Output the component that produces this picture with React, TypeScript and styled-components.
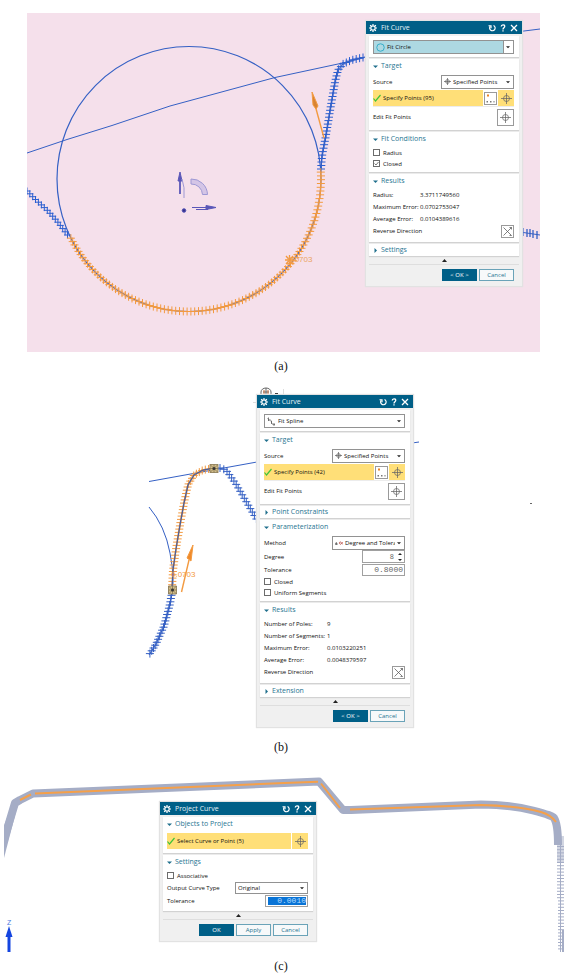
import React from "react";
import styled, { createGlobalStyle, css } from "styled-components";

const GlobalStyle = createGlobalStyle`
  *, *::before, *::after { box-sizing: border-box; }
  body { margin: 0; background: #fff; }
`;

const teal = "#005f87";
const uiFont = `"Open Sans", "Noto Sans", sans-serif`;

/* ---------- page ---------- */

const Page = styled.main`
  padding: 13px 12px 0 0;
`;

const Figure = styled.figure`
  margin: 0;
`;

const Stage = styled.div<{ $tinted?: boolean }>`
  position: relative;
  ${(p) =>
    p.$tinted &&
    css`
      margin: 0 22px 0 27px;
      background: #f5e0eb;
      overflow: hidden;
    `}
`;

const Canvas = styled.svg`
  display: block;
  width: 100%;
  height: auto;
  overflow: visible;
`;

const Caption = styled.figcaption<{ $top: number; $bottom: number }>`
  padding: ${(p) => p.$top}px 0 ${(p) => p.$bottom}px;
  font: 12px/14px "Liberation Serif", serif;
  color: #111;
  text-align: center;
`;

/* ---------- dialog ---------- */

const Dialog = styled.section<{ $place: "right" | "middle" | "left" }>`
  position: absolute;
  width: 156px;
  background: #f0f0f0;
  box-shadow: 0 0 1px 1px #e2e2e2;
  font: 6px/10px ${uiFont};
  color: #111;
  ${(p) =>
    ({
      right: css`top: 8px; right: 18px;`,
      middle: css`top: 8px; left: calc(50% - 24px);`,
      left: css`top: 27px; left: calc(50% - 121px);`,
    })[p.$place]}
`;

const TitleBar = styled.header`
  display: flex;
  align-items: center;
  height: 13px;
  padding: 0 4px 0 3px;
  background: ${teal};
  color: #fff;
`;

const DialogTitle = styled.h2`
  flex: 1;
  margin: 0 0 0 4px;
  font: 7px/12px ${uiFont};
  color: #e4f1f6;
`;

const BarButton = styled.button`
  display: flex;
  width: 8px;
  height: 9px;
  margin-left: 3px;
  padding: 0;
  border: 0;
  background: none;
  color: inherit;
  align-items: center;
  justify-content: center;
`;

const Body = styled.div`
  display: flex;
  flex-direction: column;
  gap: 2px;
  padding: 2px 3px 0;
`;

const Group = styled.section<{ $bottom?: number }>`
  padding: 0 5px ${(p) => p.$bottom ?? 3}px 4px;
  background: #fff;
  box-shadow: 0 1px 1px #d2d2d2;
`;

const GroupTitle = styled.button<{ $closed?: boolean }>`
  display: flex;
  align-items: center;
  gap: 3px;
  width: 100%;
  height: ${(p) => (p.$closed ? 12 : 15)}px;
  padding: ${(p) => (p.$closed ? 0 : "0 0 1px")};
  border: 0;
  background: none;
  font: 7px/12px ${uiFont};
  color: #1f7592;
  text-align: left;
`;

const Row = styled.div<{ $h: number }>`
  display: flex;
  align-items: center;
  justify-content: space-between;
  height: ${(p) => p.$h}px;
  white-space: nowrap;
`;

const TypeRow = styled.div`
  padding-top: 4px;
`;

const Highlight = styled.div<{ $ruled?: boolean }>`
  display: flex;
  gap: 1px;
  height: ${(p) => (p.$ruled ? 18 : 17)}px;
  padding-top: 1px;
  border-bottom: ${(p) => (p.$ruled ? "1px solid #ececec" : 0)};
`;

const Picked = styled.span`
  display: flex;
  flex: 1;
  align-items: center;
  gap: 2px;
  background: #ffdf78;
  white-space: nowrap;
`;

const IconButton = styled.button<{ $size: number; $tone?: "gold" | "white" }>`
  display: flex;
  align-items: center;
  justify-content: center;
  align-self: center;
  width: ${(p) => p.$size}px;
  height: ${(p) => p.$size}px;
  padding: 0;
  border: ${(p) => (p.$tone === "gold" ? 0 : "1px solid #9a9a9a")};
  background: ${(p) => (p.$tone === "gold" ? "#ffdf78" : "#fff")};
`;

const SelectBox = styled.span<{ $w?: number; $h: number; $filled?: boolean }>`
  display: flex;
  align-items: center;
  gap: 2px;
  width: ${(p) => (p.$w ? `${p.$w}px` : "100%")};
  height: ${(p) => p.$h}px;
  padding: 0 3px 0 2px;
  border: 1px solid #929292;
  background: ${(p) =>
    p.$filled ? "linear-gradient(90deg, #add8e2 calc(100% - 10px), #929292 0 calc(100% - 9px), #fff 0)" : "#fff"};
`;

const Select = styled.select`
  flex: 1;
  min-width: 0;
  padding: 0;
  border: 0;
  background: none;
  appearance: none;
  font: inherit;
  color: inherit;
  overflow: hidden;
`;

const CheckLabel = styled.label`
  display: flex;
  align-items: center;
  gap: 3px;
`;

const Check = styled.input`
  appearance: none;
  width: 7px;
  height: 7px;
  margin: 0;
  border: 1px solid #6c6c6c;
  background: #fff;
`;

const CheckWrap = styled.span`
  display: grid;
  > * {
    grid-area: 1 / 1;
  }
`;

const NumberBox = styled.span<{ $w: number; $h: number }>`
  display: flex;
  align-items: center;
  width: ${(p) => p.$w}px;
  height: ${(p) => p.$h}px;
  padding: 1px;
  border: 1px solid #a0a0a0;
  background: #fff;
`;

const NumberInput = styled.input<{ $selected?: boolean; $small?: boolean }>`
  flex: 1;
  min-width: 0;
  width: 100%;
  height: 100%;
  margin-left: ${(p) => (p.$selected ? 1 : 0)}px;
  padding: 0 ${(p) => (p.$small ? 3 : 0)}px 0 0;
  border: 0;
  background: ${(p) => (p.$selected ? "#0a74d6" : "none")};
  font: ${(p) => (p.$small ? 7 : 8)}px/9px "Liberation Mono", monospace;
  color: ${(p) => (p.$selected ? "#b4dcff" : "#666")};
  text-align: right;
`;

const Results = styled.dl<{ $names: number }>`
  display: grid;
  grid-template-columns: ${(p) => p.$names}px 1fr;
  grid-auto-rows: 12px;
  align-items: center;
  margin: 0;
  white-space: nowrap;
`;

const Value = styled.dd`
  margin: 0;
`;

const Expander = styled.button`
  display: flex;
  align-items: center;
  justify-content: center;
  height: 9px;
  width: calc(100% - 6px);
  margin: 0 3px;
  padding: 1px 0 0;
  border: 0;
  border-bottom: 1px solid #dedede;
  background: none;
`;

const Footer = styled.footer`
  display: flex;
  justify-content: flex-end;
  gap: 2px;
  padding: 4px 8px 5px;
`;

const Action = styled.button<{ $primary?: boolean }>`
  width: 35px;
  height: 12px;
  padding: 0;
  border: 1px solid ${(p) => (p.$primary ? teal : "#6aa3b8")};
  background: ${(p) => (p.$primary ? teal : "#f7f9fa")};
  font: 6px/10px ${uiFont};
  color: ${(p) => (p.$primary ? "#fff" : "#1f7592")};
`;

/* ---------- icons ---------- */

const Gear = () => (
  <svg width="8" height="8" viewBox="0 0 16 16" fill="none" stroke="#fff">
    <circle cx="8" cy="8" r="4.4" strokeWidth="2.4" />
    <path
      strokeWidth="2.4"
      d="M8 0v3M8 13v3M0 8h3M13 8h3M2.3 2.3l2.2 2.2M11.5 11.5l2.2 2.2M13.7 2.3l-2.2 2.2M4.5 11.5l-2.2 2.2"
    />
  </svg>
);
const Reset = () => (
  <svg width="8" height="8" viewBox="0 0 16 16" fill="none" stroke="#fff" strokeWidth="2.4">
    <path d="M11 3A5.500 5.500 0 1 1 4.500 4.500" />
    <path d="M1 3.500h5v5" />
  </svg>
);
const Help = () => (
  <svg width="6" height="8" viewBox="0 0 12 16" fill="none" stroke="#fff" strokeWidth="2.600">
    <path d="M2.500 5c0-4.500 7-4.500 7-.5C9.500 7.500 6 7.500 6 11" />
    <path d="M6 12.500v2.600" />
  </svg>
);
const Close = () => (
  <svg width="8" height="8" viewBox="0 0 16 16" stroke="#fff" strokeWidth="2.600">
    <path d="M2 2l12 12M14 2L2 14" />
  </svg>
);
const Triangle = ({ to, fill = "#1f6f8c", size = 5 }: { to: "down" | "right" | "up"; fill?: string; size?: number }) => (
  <svg width={size} height={size} viewBox="0 0 10 10" fill={fill}>
    <path d={{ down: "M0 3h10L5 8z", right: "M3 0v10l5-5z", up: "M0 8h10L5 2z" }[to]} />
  </svg>
);
const Crosshair = ({ size = 11 }: { size?: number }) => (
  <svg width={size} height={size} viewBox="0 0 22 22" fill="none" stroke="#666" strokeWidth={size > 8 ? 1.5 : 2.4}>
    <circle cx="11" cy="11" r="6" />
    <path d="M11 0v22M0 11h22" />
  </svg>
);
const Tick = () => (
  <svg width="8" height="8" viewBox="0 0 16 16" fill="none" stroke="#3fc43a" strokeWidth="2.400">
    <path d="M1 9l4 5L15 2" />
  </svg>
);
const CheckMark = () => (
  <svg width="7" height="7" viewBox="0 0 14 14" fill="none" stroke="#444" strokeWidth="1.400" pointerEvents="none">
    <path d="M3 7l3 3 5-6" />
  </svg>
);
const PointsIcon = () => (
  <svg width="11" height="11" viewBox="0 0 22 22">
    <path fill="#e8842a" d="M4 3h4v4H4z" />
    <path fill="#777" d="M3 16h3v3H3zM10 16h3v3h-3zM17 16h2v3h-2z" />
  </svg>
);
const ReverseIcon = () => (
  <svg width="9" height="9" viewBox="0 0 18 18" fill="none" stroke="#555" strokeWidth="1.500">
    <path d="M1 1l16 16M17 1L1 17M13 1h4v4M13 17h4" />
  </svg>
);
const CircleIcon = () => (
  <svg width="9" height="9" viewBox="0 0 18 18" fill="none" stroke="#28a9c6" strokeWidth="1.800">
    <circle cx="9" cy="9" r="7.500" />
  </svg>
);
const SplineIcon = () => (
  <svg width="9" height="9" viewBox="0 0 18 18" fill="none" stroke="#555" strokeWidth="1.500">
    <path d="M3 1v7M1 3l4 3M3 7c5-3 5 0 6 4s3 4 7 4M9 8v6M14 12v6" />
  </svg>
);
const MethodIcon = () => (
  <svg width="8" height="6" viewBox="0 0 18 12" fill="none" strokeWidth="1.800">
    <path stroke="#333" d="M1 9l2-4 2 4z" />
    <path stroke="#b5443c" d="M17 4c-3 6-7 6-7 2s4-3 7 3" />
  </svg>
);
const Spin = () => (
  <svg width="6" height="10" viewBox="0 0 12 20" fill="#222">
    <path d="M2 6h8L6 2zM2 14h8l-4 4z" />
  </svg>
);

/* ---------- dialog parts ---------- */

function Bar({ title }: { title: string }) {
  return (
    <TitleBar>
      <Gear />
      <DialogTitle>{title}</DialogTitle>
      <BarButton aria-label="Reset"><Reset /></BarButton>
      <BarButton aria-label="Help"><Help /></BarButton>
      <BarButton aria-label="Close"><Close /></BarButton>
    </TitleBar>
  );
}

function Heading({ children, closed }: { children: string; closed?: boolean }) {
  return (
    <GroupTitle $closed={closed} aria-expanded={!closed}>
      <Triangle to={closed ? "right" : "down"} />
      {children}
    </GroupTitle>
  );
}

type DropProps = {
  id?: string;
  label?: string;
  value: string;
  w?: number;
  h?: number;
  filled?: boolean;
  icon?: React.ReactNode;
};
function Drop({ id, label, value, w, h = 14, filled, icon }: DropProps) {
  return (
    <SelectBox $w={w} $h={h} $filled={filled}>
      {icon}
      <Select id={id} aria-label={label}>
        <option>{value}</option>
      </Select>
      <Triangle to="down" fill="#222" size={4} />
    </SelectBox>
  );
}

function CheckRow({ label, checked }: { label: string; checked?: boolean }) {
  return (
    <Row $h={11}>
      <CheckLabel>
        <CheckWrap>
          <Check type="checkbox" defaultChecked={checked} />
          {checked && <CheckMark />}
        </CheckWrap>
        {label}
      </CheckLabel>
    </Row>
  );
}

function TargetGroup({ id, count }: { id: string; count: number }) {
  return (
    <Group>
      <Heading>Target</Heading>
      <Row $h={15}>
        <label htmlFor={id}>Source</label>
        <Drop id={id} value="Specified Points" w={73} icon={<Crosshair size={7} />} />
      </Row>
      <Highlight $ruled>
        <Picked><Tick />Specify Points ({count})</Picked>
        <IconButton $size={13} aria-label="Point dialog"><PointsIcon /></IconButton>
        <IconButton $size={16} $tone="gold" aria-label="Specify points"><Crosshair /></IconButton>
      </Highlight>
      <Row $h={20}>
        <span>Edit Fit Points</span>
        <IconButton $size={17} aria-label="Edit fit points"><Crosshair /></IconButton>
      </Row>
    </Group>
  );
}

function ResultsGroup({ rows, names }: { rows: [string, string][]; names: number }) {
  return (
    <Group $bottom={5}>
      <Heading>Results</Heading>
      <Results $names={names}>
        {rows.map(([name, value]) => (
          <React.Fragment key={name}>
            <dt>{name}</dt>
            <Value>{value}</Value>
          </React.Fragment>
        ))}
      </Results>
      <Row $h={12}>
        <span>Reverse Direction</span>
        <IconButton $size={13} aria-label="Reverse direction"><ReverseIcon /></IconButton>
      </Row>
    </Group>
  );
}

function Bottom({ actions }: { actions: string[] }) {
  return (
    <>
      <Expander aria-label="Show less"><Triangle to="up" fill="#222" /></Expander>
      <Footer>
        {actions.map((a, i) => (
          <Action key={a} $primary={i === 0}>{a}</Action>
        ))}
      </Footer>
    </>
  );
}

/* ---------- geometry ---------- */

type Pt = [number, number];

const line = (pts: Pt[]) => "M" + pts.map((p) => p.join(" ")).join("L");

function pluses(pts: Pt[], step: number, r: number) {
  let d = "";
  let carry = 0;
  for (let i = 1; i < pts.length; i++) {
    const [x0, y0] = pts[i - 1];
    const [x1, y1] = pts[i];
    const len = Math.hypot(x1 - x0, y1 - y0);
    let t = carry;
    for (; t < len; t += step) {
      const x = x0 + ((x1 - x0) * t) / len;
      const y = y0 + ((y1 - y0) * t) / len;
      d += `M${(x - r).toFixed(1)} ${y.toFixed(1)}h${2 * r}M${x.toFixed(1)} ${(y - r).toFixed(1)}v${2 * r}`;
    }
    carry = t - len;
  }
  return d;
}

const arc: Pt[] = Array.from({ length: 80 }, (_, i) => {
  const a = ((-3 + (i * 157) / 79) * Math.PI) / 180;
  return [189 + 132 * Math.cos(a), 179 + 132.5 * Math.sin(a)];
});
const riseA: Pt[] = [[321, 169], [322, 156], [326, 135], [331, 105], [335, 82], [338, 70], [343, 64], [352, 60], [365, 57]];
const tailA: Pt[] = [[27, 191], [36, 200], [47, 210], [57, 221], [69, 237]];
const splineB: Pt[] = [[172, 588], [173, 570], [176, 549], [180, 525], [184, 503], [188, 485], [194, 475], [203, 470], [214, 468]];
const lowB: Pt[] = [[172, 592], [170, 604], [164, 626], [156, 644], [149, 655]];
const rightB: Pt[] = [[220, 468], [226, 470], [236, 484], [247, 503], [257, 520]];

const blue = "#3560c4";
const orange = "#f39a40";

function DrawingA() {
  return (
    <Canvas viewBox="27 13 513 339" fill="none" stroke={blue} strokeWidth="1">
      <ellipse cx="189" cy="179" rx="132" ry="132.500" strokeWidth="1.200" />
      <path d="M27 153L67 139.500L112 125.500L170 106L275 77.500L345 62.500L366 57M520 31.500L540 29M520 232L540 235" />
      <path d={pluses(riseA, 3.5, 4)} stroke="#2c5fd0" />
      <path d={line(riseA)} />
      <path d={pluses(tailA, 4, 3.5)} stroke="#2c5fd0" />
      <path d="M523 228v8M527 229v8M530 229v8M533 230v8M537 231v8" strokeWidth="1.300" />
      <path d={pluses(arc, 3.8, 4)} stroke={orange} />
      <g stroke={orange}>
        <path d="M324 138L315 105" strokeWidth="1.400" />
        <path d="M312 92l1 13 3 4 2-3z" fill="#d88332" />
        <path d="M285 260h9M289.500 255v10M286 256l7 8M293 256l-7 8" strokeWidth="1.300" />
      </g>
      <text x="288" y="262" stroke="none" fill="#eba462" fontSize="8" fontFamily="Liberation Sans, sans-serif">0.0703</text>
      <g stroke="#5a57b8" fill="#5a57b8">
        <path d="M180 194v-13" strokeWidth="1.800" />
        <path d="M180 172l-2 9h4z" />
        <path d="M182 179q3 8 2 19" fill="none" stroke="#9d98d4" />
        <path d="M191 179A16 16 0 0 1 207.500 194.500H202.500A11 11 0 0 0 191 184z" fill="#d4c5e6" stroke="#9d98d4" />
        <path d="M192 207.500h14M196 209.500h12" />
        <path d="M206 205.500l10 2-10 2z" />
        <circle cx="184" cy="210.500" r="1.800" fill="#33318c" />
      </g>
    </Canvas>
  );
}

function Knot({ x, y }: { x: number; y: number }) {
  return (
    <g transform={`translate(${x} ${y})`} stroke="#85754f" strokeWidth=".8">
      <path d="M-4-4h8v8h-8z" fill="#d3bf8c" />
      <path d="M-4-4l8 8M4-4l-8 8M0-4v8M-4 0h8" />
      <circle r="1.500" fill="#333" stroke="none" />
    </g>
  );
}

function DrawingB() {
  return (
    <Canvas viewBox="0 387 562 340" fill="none" stroke={blue} strokeWidth="1">
      <g stroke="#666">
        <path d="M261 395v-3a5 4 0 0 1 10 0v3M263 392h6M266 388v7" />
        <path d="M264 390v4M268 390v4" stroke="#c46a3a" />
        <path d="M275 393.500h3" stroke="#222" />
        <path d="M283.500 389v6M253 402.500h4" stroke="#ddd" />
        <path d="M530 503.500h2" />
      </g>
      <path d="M149 481.500L257 462M412 443L419 442M149 507Q165 526 170 553T172 590" />
      <path d={pluses(splineB, 3.3, 4)} stroke={orange} />
      <path d={line(splineB)} stroke="#4a5f9c" strokeWidth="1.300" />
      <path d={pluses(lowB, 3.3, 4)} />
      <path d={line(lowB)} />
      <path d={pluses(rightB, 4, 4)} />
      <g stroke={orange}>
        <path d="M181.500 592L189 560" strokeWidth="1.400" />
        <path d="M193 545l-6 13 4 3z" fill="#f08a2a" />
      </g>
      <text x="171" y="577" stroke="none" fill={orange} fontSize="8" fontFamily="Liberation Sans, sans-serif">0.0703</text>
      <Knot x={172.5} y={590} />
      <Knot x={214} y={468.5} />
    </Canvas>
  );
}

const rungs = Array.from({ length: 33 }, (_, i) => `M${557 + (i > 16 ? 1 : 0)} ${846.5 + i * 3.2}h7`).join("");

function DrawingC() {
  return (
    <Canvas viewBox="0 775 562 177" fill="none">
      <clipPath id="frame">
        <path d="M4 775h560v177H4z" />
      </clipPath>
      <g clipPath="url(#frame)" stroke="#a5adc6">
        <path d="M11.500 805L18 804L4 858V826z" fill="#a5adc6" stroke="none" />
        <path
          strokeWidth="8"
          strokeLinejoin="round"
          d="M3 843L15 803L20 800L33 793.500L284 783L319 781.500L343 810L351 810L481 804.500Q512 805 533 810.500T554 818Q558 824 558 845"
        />
        <path strokeWidth="1" d="M560.500 845v107" />
        <path strokeWidth="1" d={rungs} />
        <path strokeWidth="7" opacity=".5" d="M560.500 836v27" />
        <path strokeWidth="2" d="M563 930v22" />
      </g>
      <path
        stroke="#f5a04a"
        strokeWidth="2"
        d="M20 800L31 794.500M35 793.500L284 783L318 781.800M321 783.500L340 808M350 809.500L481 805Q520 806 541 812Q551 815 556 822"
      />
      <path d="M9 952v-17" stroke="#1445e0" strokeWidth="3" />
      <path d="M9 926l3.500 11h-7z" fill="#1445e0" />
      <text x="7" y="925" fontSize="7" fill="#4a78e0" fontFamily="Liberation Sans, sans-serif">Z</text>
    </Canvas>
  );
}

/* ---------- app ---------- */

export default function App() {
  return (
    <Page>
      <GlobalStyle />

      <Figure>
        <Stage $tinted>
          <DrawingA />
          <Dialog $place="right" aria-label="Fit Curve, circle">
            <Bar title="Fit Curve" />
            <Body>
              <Group>
                <TypeRow>
                  <Drop label="Curve type" value="Fit Circle" filled icon={<CircleIcon />} />
                </TypeRow>
              </Group>
              <TargetGroup id="source-circle" count={95} />
              <Group>
                <Heading>Fit Conditions</Heading>
                <CheckRow label="Radius" />
                <CheckRow label="Closed" checked />
              </Group>
              <ResultsGroup
                names={47}
                rows={[
                  ["Radius:", "3.3711749560"],
                  ["Maximum Error:", "0.0702753047"],
                  ["Average Error:", "0.0104389616"],
                ]}
              />
              <Group $bottom={0}>
                <Heading closed>Settings</Heading>
              </Group>
            </Body>
            <Bottom actions={["< OK >", "Cancel"]} />
          </Dialog>
        </Stage>
        <Caption $top={7} $bottom={14}>(a)</Caption>
      </Figure>

      <Figure>
        <Stage>
          <DrawingB />
          <Dialog $place="middle" aria-label="Fit Curve, spline">
            <Bar title="Fit Curve" />
            <Body>
              <Group>
                <TypeRow>
                  <Drop label="Curve type" value="Fit Spline" icon={<SplineIcon />} />
                </TypeRow>
              </Group>
              <TargetGroup id="source-spline" count={42} />
              <Group $bottom={0}>
                <Heading closed>Point Constraints</Heading>
              </Group>
              <Group>
                <Heading>Parameterization</Heading>
                <Row $h={15}>
                  <label htmlFor="method">Method</label>
                  <Drop id="method" value="Degree and Tolerance" w={73} icon={<MethodIcon />} />
                </Row>
                <Row $h={13}>
                  <label htmlFor="degree">Degree</label>
                  <NumberBox $w={43} $h={13}>
                    <NumberInput id="degree" defaultValue="8" $small />
                    <Spin />
                  </NumberBox>
                </Row>
                <Row $h={13}>
                  <label htmlFor="tolerance">Tolerance</label>
                  <NumberBox $w={43} $h={12}>
                    <NumberInput id="tolerance" defaultValue="0.8000" />
                  </NumberBox>
                </Row>
                <CheckRow label="Closed" />
                <CheckRow label="Uniform Segments" />
              </Group>
              <ResultsGroup
                names={63}
                rows={[
                  ["Number of Poles:", "9"],
                  ["Number of Segments:", "1"],
                  ["Maximum Error:", "0.0103220251"],
                  ["Average Error:", "0.0048379597"],
                ]}
              />
              <Group $bottom={0}>
                <Heading closed>Extension</Heading>
              </Group>
            </Body>
            <Bottom actions={["< OK >", "Cancel"]} />
          </Dialog>
        </Stage>
        <Caption $top={13} $bottom={21}>(b)</Caption>
      </Figure>

      <Figure>
        <Stage>
          <DrawingC />
          <Dialog $place="left" aria-label="Project Curve">
            <Bar title="Project Curve" />
            <Body>
              <Group $bottom={4}>
                <Heading>Objects to Project</Heading>
                <Highlight>
                  <Picked><Tick />Select Curve or Point (5)</Picked>
                  <IconButton $size={16} $tone="gold" aria-label="Select curve"><Crosshair /></IconButton>
                </Highlight>
              </Group>
              <Group $bottom={4}>
                <Heading>Settings</Heading>
                <CheckRow label="Associative" />
                <Row $h={13}>
                  <label htmlFor="output">Output Curve Type</label>
                  <Drop id="output" value="Original" w={73} h={12} />
                </Row>
                <Row $h={13}>
                  <label htmlFor="project-tolerance">Tolerance</label>
                  <NumberBox $w={43} $h={12}>
                    <NumberInput id="project-tolerance" defaultValue="0.0010" $selected />
                  </NumberBox>
                </Row>
              </Group>
            </Body>
            <Bottom actions={["OK", "Apply", "Cancel"]} />
          </Dialog>
        </Stage>
        <Caption $top={7} $bottom={6}>(c)</Caption>
      </Figure>
    </Page>
  );
}
